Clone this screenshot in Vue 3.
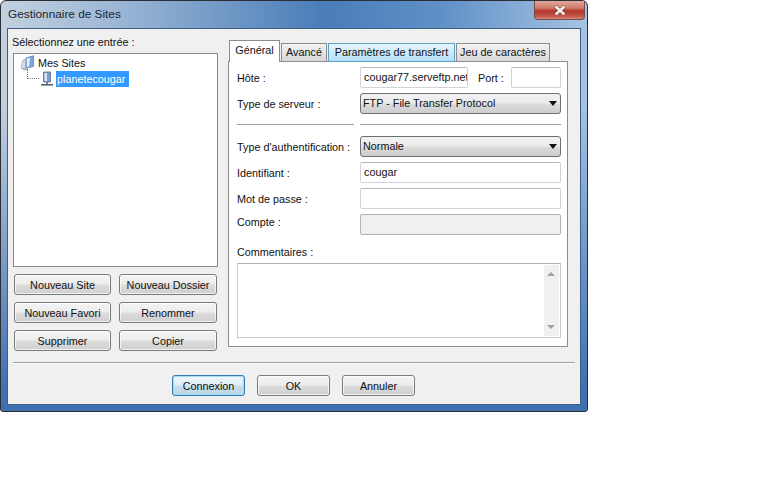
<script setup>
const leftButtons = ['Nouveau Site', 'Nouveau Dossier', 'Nouveau Favori', 'Renommer', 'Supprimer', 'Copier']
const tabs = [
  { label: 'Général', cls: 'tab-active' },
  { label: 'Avancé', cls: 'tab-w1' },
  { label: 'Paramètres de transfert', cls: 'tab-hot' },
  { label: 'Jeu de caractères', cls: 'tab-w3' }
]
</script>

<template>
  <div class="page">
    <div class="window">
      <div class="titlebar">
        <span class="title">Gestionnaire de Sites</span>
        <div class="close">
          <svg width="16" height="11" viewBox="0 0 16 11">
            <path d="M3 1.5 L13 9.5 M13 1.5 L3 9.5" stroke="#5a2620" stroke-width="4" fill="none" opacity=".55" />
            <path d="M3.5 1.5 L12.5 9.5 M12.5 1.5 L3.5 9.5" stroke="#f2f0ee" stroke-width="2.6" fill="none" />
          </svg>
        </div>
      </div>
      <div class="client">
        <div class="columns">
          <div class="left">
            <div class="left-label">Sélectionnez une entrée :</div>
            <div class="tree">
              <div class="node">
                <svg class="ico" width="15" height="16" viewBox="0 0 15 16">
                  <path d="M1 13.5 L3 5 L6 4 L6 13.5 Z" fill="#d8dde4" stroke="#9aa4b2" stroke-width=".7" />
                  <path d="M6 13 L6 3 L13.5 .8 L13.5 11.5 Z" fill="#7ea6e0" stroke="#5d82bb" stroke-width=".8" />
                  <path d="M6.8 12 L6.8 3.6 L10 2.7 L9 11.6 Z" fill="#e6effb" />
                  <path d="M3 13.5 h5 v1.8 h-5 z" fill="#aab2bd" />
                </svg>
                <span class="node-text">Mes Sites</span>
              </div>
              <div class="node child">
                <span class="dots"></span>
                <svg class="ico server" width="16" height="16" viewBox="0 0 16 16">
                  <path d="M4.5 1 h7 v10 h-7 z" fill="#7d9ccc" stroke="#56708f" stroke-width=".8" />
                  <path d="M5.5 2 h2.5 v8 h-2.5 z" fill="#d9e5f5" />
                  <path d="M7 11 h2 v2 h-2 z" fill="#7b8694" />
                  <path d="M2 13 h12 v1.6 h-12 z" fill="#56616f" />
                </svg>
                <span class="node-text selected">planetecougar</span>
              </div>
            </div>
            <div class="left-buttons">
              <button v-for="b in leftButtons" :key="b" class="btn">{{ b }}</button>
            </div>
          </div>

          <div class="right">
            <div class="tabs">
              <div v-for="t in tabs" :key="t.label" class="tab" :class="t.cls">{{ t.label }}</div>
            </div>
            <div class="panel">
              <div class="row row-host">
                <span class="lbl">Hôte :</span>
                <div class="input host">cougar77.serveftp.net</div>
                <span class="port-lbl">Port :</span>
                <div class="input port"></div>
              </div>
              <div class="row">
                <span class="lbl">Type de serveur :</span>
                <div class="select">FTP - File Transfer Protocol<i class="arrow"></i></div>
              </div>
              <div class="seps"><span class="sep-a"></span><span class="sep-b"></span></div>
              <div class="row">
                <span class="lbl">Type d'authentification :</span>
                <div class="select">Normale<i class="arrow"></i></div>
              </div>
              <div class="row">
                <span class="lbl">Identifiant :</span>
                <div class="input wide">cougar</div>
              </div>
              <div class="row">
                <span class="lbl">Mot de passe :</span>
                <div class="input wide"></div>
              </div>
              <div class="row">
                <span class="lbl lbl-up">Compte :</span>
                <div class="input wide disabled"></div>
              </div>
              <div class="comment-label">Commentaires :</div>
              <div class="textarea">
                <div class="scrollbar">
                  <i class="sc-up"></i>
                  <i class="sc-down"></i>
                </div>
              </div>
            </div>
          </div>
        </div>
        <div class="divider"></div>
        <div class="actions">
          <button class="btn btn-main default">Connexion</button>
          <button class="btn btn-main">OK</button>
          <button class="btn btn-main">Annuler</button>
        </div>
      </div>
    </div>
  </div>
</template>

<style>
html, body { margin: 0; background: #fff; }
</style>

<style scoped>
.page {
  width: 768px;
  height: 480px;
  background: #fff;
  overflow: hidden;
  font-family: "Liberation Sans", Arial, sans-serif;
  font-size: 10.8px;
  color: #111;
}
.window {
  width: 588px;
  height: 412px;
  box-sizing: border-box;
  padding: 0 6px 6px;
  border: 1px solid #2b2f35;
  border-radius: 6px 6px 3px 3px;
  background:
    linear-gradient(180deg, rgba(62, 112, 178, 0) 0%, rgba(62, 112, 178, 0) 25%, rgba(62, 112, 178, 1) 95%),
    linear-gradient(90deg, #c3d1df 0%, #9fb9d6 18%, #4a7db9 55%, #5f90c7 75%, #a7c3e2 100%);
}
.titlebar {
  height: 27px;
  display: flex;
  justify-content: space-between;
  align-items: flex-start;
  margin-right: -4px;
}
.title {
  font-size: 11.8px;
  line-height: 27px;
  margin-left: 1px;
  color: #1c2630;
}
.close {
  width: 51px;
  height: 19px;
  box-sizing: border-box;
  border: 1px solid #7a4a45;
  border-top: 0;
  border-radius: 0 0 4px 4px;
  background: linear-gradient(180deg, #e2a79e 0%, #cf7868 40%, #b5362a 55%, #c4584a 85%, #d98a7e 100%);
  display: flex;
  align-items: center;
  justify-content: center;
}
.client {
  height: 377px;
  box-sizing: border-box;
  background: #f0f0f0;
  border: 1px solid #3d5f88;
  padding: 0 5px;
  display: flex;
  flex-direction: column;
}
.columns {
  display: flex;
  height: 333px;
}
.left {
  width: 205px;
  margin-right: 10px;
  display: flex;
  flex-direction: column;
}
.left-label {
  height: 24px;
  line-height: 26px;
  margin-left: -1px;
}
.tree {
  height: 214px;
  box-sizing: border-box;
  border: 1px solid #8a8a8a;
  background: #fff;
  padding: 1px 0 0 6px;
  flex: none;
}
.node {
  height: 16px;
  display: flex;
  align-items: center;
  position: relative;
  line-height: 16px;
}
.ico { flex: none; }
.node-text { margin-left: 2px; padding: 0 1px; white-space: nowrap; }
.child { padding-left: 19px; }
.server { margin-right: -1px; }
.selected {
  background: #3399ff;
  color: #fff;
  width: 73px;
  box-sizing: border-box;
}
.dots {
  position: absolute;
  left: 7px;
  top: -2px;
  width: 11px;
  height: 9px;
  border-left: 1px dotted #777;
  border-bottom: 1px dotted #777;
}
.left-buttons {
  margin: 7px 0 0 1px;
  display: grid;
  grid-template-columns: 97px 98px;
  column-gap: 8px;
  row-gap: 7px;
}
.btn {
  height: 21px;
  padding: 0;
  box-sizing: border-box;
  font: inherit;
  color: #111;
  border: 1px solid #7b7b7b;
  border-radius: 3px;
  background: linear-gradient(180deg, #f4f4f4 0%, #ececec 48%, #dcdcdc 52%, #cfcfcf 100%);
  box-shadow: inset 0 0 0 1px rgba(255, 255, 255, .7);
}
.right {
  width: 340px;
  margin-top: 11px;
  display: flex;
  flex-direction: column;
}
.tabs {
  display: flex;
  align-items: flex-end;
  height: 22px;
  margin-bottom: -1px;
  padding-left: 1px;
  position: relative;
  z-index: 1;
}
.tab {
  height: 19px;
  box-sizing: border-box;
  line-height: 17px;
  border: 1px solid #8c8c8c;
  margin-right: 1px;
  text-align: center;
  white-space: nowrap;
  background: linear-gradient(180deg, #f2f2f2, #d8d8d8);
}
.tab-active {
  width: 51px;
  height: 22px;
  background: #fff;
  border-bottom: 0;
  line-height: 18px;
}
.tab-w1 { width: 46px; }
.tab-hot {
  width: 127px;
  background: linear-gradient(180deg, #e6f5fd, #b4e0f8);
  border-color: #5f9fc2;
}
.tab-w3 { width: 94px; }
.panel {
  width: 340px;
  height: 286px;
  box-sizing: border-box;
  background: #fff;
  border: 1px solid #8c8c8c;
  padding: 5px 6px 0 8px;
}
.row {
  display: flex;
  align-items: center;
  height: 21px;
  margin-bottom: 5px;
}
.lbl { width: 123px; flex: none; white-space: nowrap; }
.lbl-up { position: relative; top: -3px; }
.input {
  height: 21px;
  box-sizing: border-box;
  border: 1px solid #d0d4d8;
  border-top-color: #b5b8bc;
  border-radius: 2px;
  background: #fff;
  padding-left: 3px;
  line-height: 19px;
  overflow: hidden;
  white-space: nowrap;
}
.host { width: 108px; flex: none; padding-right: 3px; }
.port-lbl { margin: 0 0 0 10px; width: 33px; flex: none; }
.port { width: 50px; flex: none; }
.wide { width: 201px; }
.disabled { background: #f0f0f0; border-color: #aeb1b5; }
.select {
  width: 201px;
  height: 21px;
  box-sizing: border-box;
  position: relative;
  border: 1px solid #6f6f6f;
  border-radius: 3px;
  padding-left: 2px;
  line-height: 19px;
  background: linear-gradient(180deg, #f2f2f2 0%, #ebebeb 48%, #dcdcdc 52%, #cdcdcd 100%);
}
.arrow {
  position: absolute;
  right: 3px;
  top: 7px;
  border-left: 4px solid transparent;
  border-right: 4px solid transparent;
  border-top: 5px solid #111;
}
.seps {
  display: flex;
  height: 2px;
  margin: 10px 0 10px;
}
.sep-a, .sep-b {
  display: block;
  height: 1px;
  background: #a0a0a0;
  border-bottom: 1px solid #fff;
}
.sep-a { width: 117px; margin-right: 6px; }
.sep-b { width: 201px; }
.comment-label {
  margin-top: 9px;
  height: 19px;
  line-height: 16px;
}
.textarea {
  width: 324px;
  height: 75px;
  box-sizing: border-box;
  border: 1px solid #c8cbce;
  border-top-color: #b0b3b6;
  display: flex;
  justify-content: flex-end;
  padding: 1px;
}
.scrollbar {
  width: 15px;
  background: #f0f0f0;
  position: relative;
}
.sc-up, .sc-down {
  position: absolute;
  left: 3px;
  border-left: 4px solid transparent;
  border-right: 4px solid transparent;
}
.sc-up { top: 7px; border-bottom: 4px solid #a0a0a0; }
.sc-down { bottom: 7px; border-top: 4px solid #a0a0a0; }
.divider {
  height: 1px;
  background: #a0a0a0;
  border-bottom: 1px solid #fff;
}
.actions {
  display: flex;
  margin: 11px 0 0 159px;
  gap: 12px;
}
.btn-main { width: 73px; }
.default {
  border-color: #2f7db5;
  box-shadow: inset 0 0 0 1px #a6dcf5;
  background: linear-gradient(180deg, #eef7fc 0%, #e0eef6 48%, #c8dfec 52%, #bcd6e6 100%);
}
</style>
